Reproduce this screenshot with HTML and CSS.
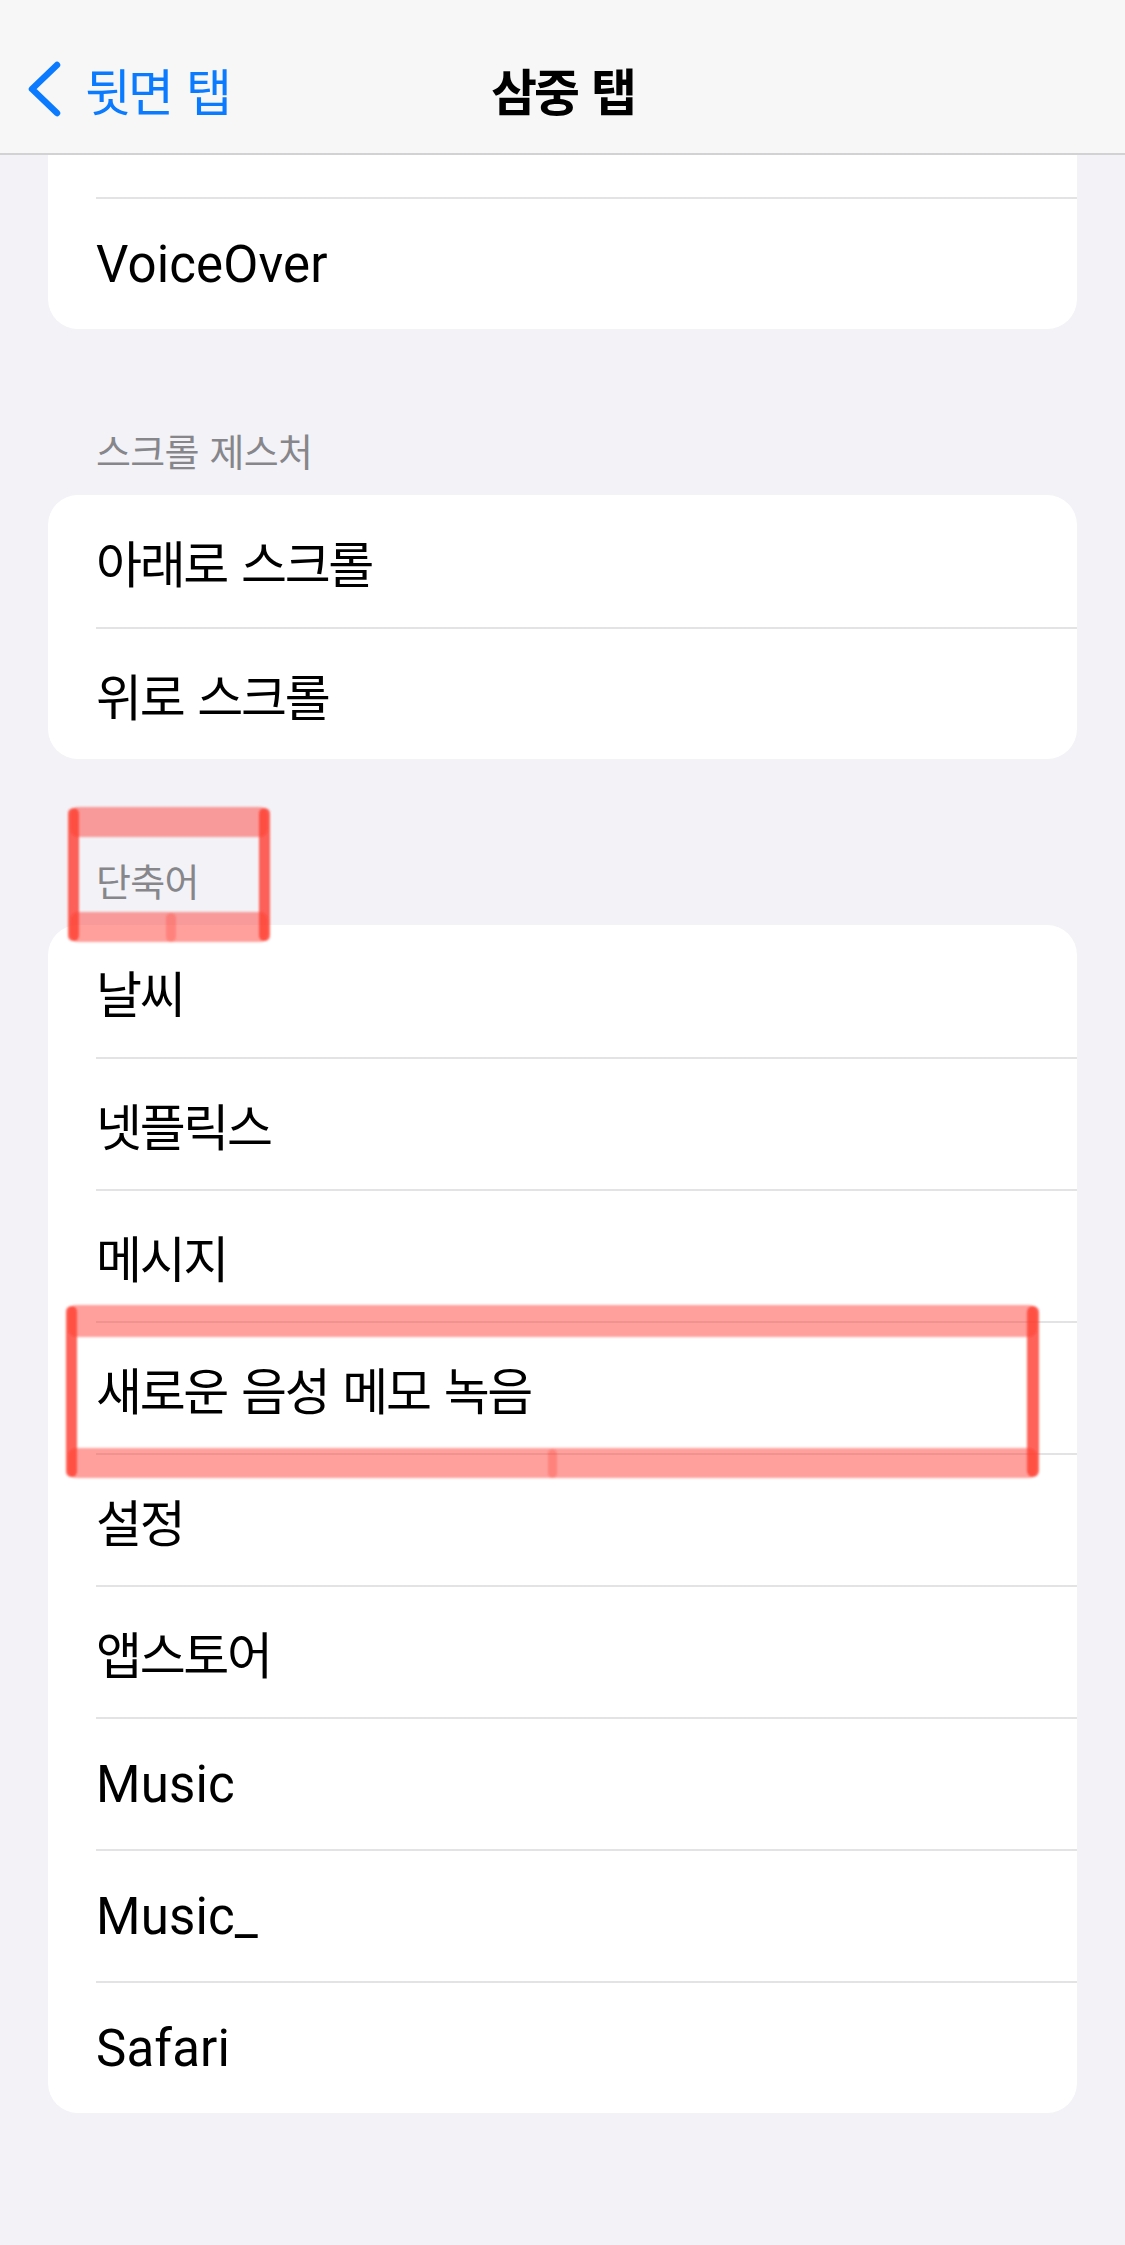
FILE: index.html
```html
<!DOCTYPE html>
<html lang="ko">
<head>
<meta charset="utf-8">
<title>삼중 탭</title>
<link rel="stylesheet" href="styles.css">
</head>
<body>
<div class="page">
  <header class="nav">
    <div class="nav-bar">
      <div class="back">
        <svg class="chev" width="42" height="58" viewBox="0 0 42 58"><path d="M33 5 L8 29 L33 53" fill="none" stroke="#0a7aff" stroke-width="6.5" stroke-linecap="round" stroke-linejoin="round"/></svg>
        <span class="back-text">뒷면 탭</span>
      </div>
      <div class="title">삼중 탭</div>
      <div class="nav-right"></div>
    </div>
  </header>

  <main class="content">
    <section class="card card-cut">
      <div class="row row-partial"><div class="cell"></div></div>
      <div class="row"><div class="cell lat">VoiceOver</div></div>
    </section>

    <div class="sec-head">스크롤 제스처</div>
    <section class="card">
      <div class="row"><div class="cell">아래로 스크롤</div></div>
      <div class="row"><div class="cell">위로 스크롤</div></div>
    </section>

    <div class="sec-head">단축어</div>
    <section class="card">
      <div class="row"><div class="cell">날씨</div></div>
      <div class="row"><div class="cell">넷플릭스</div></div>
      <div class="row"><div class="cell">메시지</div></div>
      <div class="row"><div class="cell">새로운 음성 메모 녹음</div></div>
      <div class="row"><div class="cell">설정</div></div>
      <div class="row"><div class="cell">앱스토어</div></div>
      <div class="row"><div class="cell lat">Music</div></div>
      <div class="row"><div class="cell lat">Music_</div></div>
      <div class="row"><div class="cell lat">Safari</div></div>
    </section>
  </main>

  <div class="mark mark-1">
    <svg width="210" height="143" viewBox="-4 -4 210 143">
      <defs><filter id="soft1" x="-5%" y="-5%" width="110%" height="110%"><feGaussianBlur stdDeviation="1.1"/></filter></defs>
      <g filter="url(#soft1)">
        <rect x="2" y="0" width="198" height="30" rx="8" fill="#ff3b30" fill-opacity="0.48"/>
        <rect x="2" y="105" width="198" height="30" rx="8" fill="#ff3b30" fill-opacity="0.48"/>
        <rect x="0" y="1" width="11" height="133" rx="5.5" fill="#ff3b30" fill-opacity="0.8"/>
        <rect x="191" y="1" width="11" height="133" rx="5.5" fill="#ff3b30" fill-opacity="0.8"/>
        <rect x="98" y="106" width="10" height="29" rx="5" fill="#ff3b30" fill-opacity="0.3"/>
      </g>
    </svg>
  </div>
  <div class="mark mark-2">
    <svg width="981" height="181" viewBox="-4 -4 981 181">
      <defs><filter id="soft2" x="-2%" y="-5%" width="104%" height="110%"><feGaussianBlur stdDeviation="1.1"/></filter></defs>
      <g filter="url(#soft2)">
        <rect x="2" y="0" width="969" height="32" rx="8" fill="#ff3b30" fill-opacity="0.48"/>
        <rect x="2" y="143" width="969" height="30" rx="8" fill="#ff3b30" fill-opacity="0.48"/>
        <rect x="0" y="1" width="11" height="171" rx="5.5" fill="#ff3b30" fill-opacity="0.8"/>
        <rect x="961" y="1" width="12" height="171" rx="6" fill="#ff3b30" fill-opacity="0.8"/>
        <rect x="482" y="144" width="9" height="29" rx="4.5" fill="#ff3b30" fill-opacity="0.3"/>
      </g>
    </svg>
  </div>
</div>
</body>
</html>
```

FILE: styles.css
```css
html, body {
  margin: 0;
  padding: 0;
}

body {
  background: #f2f2f7;
  font-family: Roboto, "Noto Sans CJK KR", sans-serif;
  color: #000;
}

.page {
  position: relative;
  width: 1125px;
  min-height: 2245px;
}

.nav {
  background: #f7f7f7;
  border-bottom: 2px solid #d2d2d4;
  padding-top: 60px;
  height: 93px;
}

.nav-bar {
  height: 58px;
  display: grid;
  grid-template-columns: 1fr auto 1fr;
  align-items: center;
}

.back {
  display: flex;
  align-items: center;
  padding-left: 24px;
  color: #0a7aff;
}

.chev {
  display: block;
  flex: none;
}

.back-text {
  margin-left: 19px;
  font-family: "Noto Sans CJK KR", sans-serif;
  font-size: 50px;
  line-height: 58px;
  letter-spacing: -0.06em;
  word-spacing: 4px;
}

.title {
  font-family: "Noto Sans CJK KR", sans-serif;
  font-weight: 700;
  font-size: 50px;
  line-height: 58px;
  letter-spacing: -0.06em;
  word-spacing: 3px;
}

.content {
  padding: 0 48px;
}

.card {
  background: #fff;
  border-radius: 30px;
  overflow: hidden;
}

.card-cut {
  border-radius: 0 0 30px 30px;
}

.row {
  padding-left: 48px;
}

.cell {
  height: 132px;
  box-sizing: border-box;
  display: flex;
  align-items: center;
  font-size: 50px;
  letter-spacing: -0.047em;
  word-spacing: 4px;
  white-space: pre;
}

.row + .row .cell {
  border-top: 2px solid #e3e3e5;
}

.row-partial .cell {
  height: 42px;
}

.cell.lat {
  font-size: 51px;
  letter-spacing: 0.003em;
  word-spacing: 0;
}

.sec-head {
  margin: 101px 0 26px;
  padding-left: 48px;
  height: 39px;
  font-family: "Noto Sans CJK KR", sans-serif;
  font-size: 38px;
  line-height: 39px;
  color: #86868b;
  letter-spacing: -0.02em;
  word-spacing: 1px;
}

.mark {
  position: absolute;
  pointer-events: none;
}

.mark svg {
  display: block;
}

.mark-1 {
  left: 64px;
  top: 803px;
}

.mark-2 {
  left: 62px;
  top: 1301px;
}
```
